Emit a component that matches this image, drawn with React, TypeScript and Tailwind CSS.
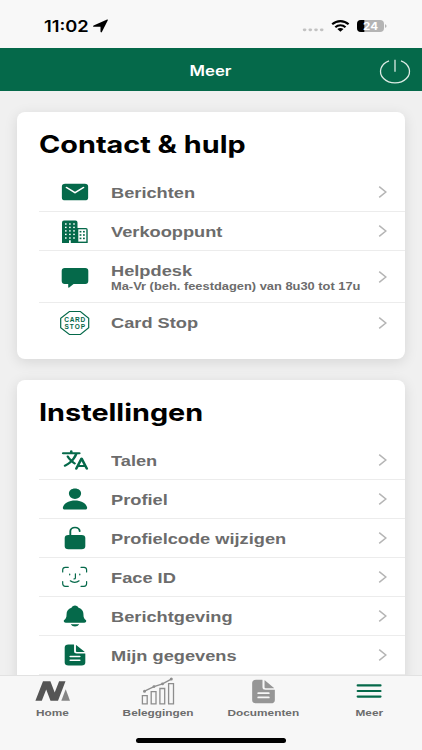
import type { ComponentType, ReactNode } from 'react';
import clsx from 'clsx';
import {
  IoDocumentText,
  IoLanguage,
  IoLockOpen,
  IoMail,
  IoNotifications,
  IoPerson,
} from 'react-icons/io5';

const Ion = ({ icon: Icon }: { icon: ComponentType<any> }) => (
  <Icon preserveAspectRatio="none" className="w-[30px] h-[24px]" />
);

const BuildingIcon = () => (
  <svg width="32" height="28" viewBox="0 0 32 28">
    <path
      d="M5 3.4h11.5a2 2 0 0 1 2 2V11H27a1.7 1.7 0 0 1 1.7 1.7V26H3V5.4a2 2 0 0 1 2-2z"
      fill="#05694a"
    />
    <path d="M19.3 12.3h8V24.6h-8z" fill="#fff" />
    {[7, 10.4, 13.9, 17.4, 21].map((y) => (
      <g key={y} fill="#fff">
        <rect x="6" y={y - 0.7} width="1.6" height="1.4" />
        <rect x="10.1" y={y - 0.7} width="1.6" height="1.4" />
        <rect x="14.2" y={y - 0.7} width="1.6" height="1.4" />
      </g>
    ))}
    {[14.7, 18, 21.4].map((y) => (
      <g key={y} fill="#05694a">
        <rect x="20.6" y={y - 0.8} width="1.8" height="1.6" />
        <rect x="24" y={y - 0.8} width="1.8" height="1.6" />
      </g>
    ))}
    <path d="M10 23.2h1.8V26H10z" fill="#fff" />
  </svg>
);

const ChatIcon = () => (
  <svg width="32" height="28" viewBox="0 0 32 28" fill="#05694a">
    <path d="M5.7 5h20.6a3 3 0 0 1 3 2.8v10.2a3 3 0 0 1-3 2.9H14.6l-4.4 3.6c-.5.4-1 .2-1-.4v-3.2H5.7a3 3 0 0 1-3-2.9V7.8a3 3 0 0 1 3-2.8z" />
  </svg>
);

const CardStopIcon = () => (
  <svg width="32" height="28" viewBox="0 0 32 28">
    <path
      d="M10.4 2.5h11l8.3 6.8v9.4l-8.3 6.8h-11L1.7 18.7V9.3z"
      fill="none"
      stroke="#05694a"
      strokeWidth="1.2"
    />
    <g
      fill="#05694a"
      fontFamily="Liberation Sans, Arial, sans-serif"
      fontWeight="700"
      fontSize="6.5"
    >
      <text x="5.2" y="12.9" textLength="21" lengthAdjust="spacing">
        CARD
      </text>
      <text x="5.4" y="19.6" textLength="20.7" lengthAdjust="spacing">
        STOP
      </text>
    </g>
  </svg>
);

const FaceIdIcon = () => (
  <svg
    width="32"
    height="28"
    viewBox="0 0 32 28"
    fill="none"
    stroke="#05694a"
    strokeWidth="1.2"
    strokeLinecap="round"
  >
    <path d="M3.7 9V6.8a2.6 2.6 0 0 1 2.6-2.5h3M22 4.3h3a2.6 2.6 0 0 1 2.6 2.5V9M27.6 18.6v2.2a2.6 2.6 0 0 1-2.6 2.5h-3M9.3 23.3h-3a2.6 2.6 0 0 1-2.6-2.5v-2.2" />
    <path d="M10.7 11v.8M20.8 11v.8M16.4 10.8v4.1c0 .7-.4 1-1.4 1M11.3 17.8c2.4 2.2 6.4 2.2 8.8 0" />
  </svg>
);

const Chevron = () => (
  <svg
    width="12"
    height="14"
    viewBox="0 0 12 14"
    fill="none"
    stroke="#b5b5b5"
    strokeWidth="1.5"
    className="mr-[16px]"
  >
    <path d="M2.2 1.6 8.8 7 2.2 12.4" />
  </svg>
);

type RowProps = {
  icon: ReactNode;
  label: string;
  sub?: string;
  last?: boolean;
};

const Row = ({ icon, label, sub, last }: RowProps) => (
  <div
    className={clsx(
      'ml-[22px] flex items-center',
      sub ? 'h-[52px]' : 'h-[39px]',
      !last && 'border-b border-[#ececec]'
    )}
  >
    <div className="w-[72px] pl-[20px] flex shrink-0 text-[#05694a]">
      <div className="w-[32px] flex justify-center">{icon}</div>
    </div>
    <div className="flex-1 text-[#6c6c6c] font-bold whitespace-nowrap">
      <div className="origin-left scale-x-[1.215] text-[15px] leading-[18px] pt-px">
        {label}
      </div>
      {sub && (
        <div className="origin-left scale-x-[1.225] w-[205px] text-[10.5px] leading-[13px]">
          {sub}
        </div>
      )}
    </div>
    <Chevron />
  </div>
);

const Card = ({ title, children }: { title: string; children: ReactNode }) => (
  <section className="mx-[17px] bg-white rounded-[8px] pb-[17px] shadow-[0_3px_14px_rgba(0,0,0,0.11)]">
    <h2 className="h-[61px] pt-[17px] pl-[22px] font-['Inter'] font-bold text-[24px] leading-[32px] text-black">
      <span className="inline-block origin-left scale-x-[1.2] whitespace-nowrap">
        {title}
      </span>
    </h2>
    {children}
  </section>
);

const Tab = ({ icon, label }: { icon: ReactNode; label: string }) => (
  <div className="flex-1 flex flex-col items-center">
    <div className="h-[30px] flex items-center">{icon}</div>
    <span className="scale-x-[1.22] text-[9.7px] leading-[14px] font-bold text-[#6c6c6c]">
      {label}
    </span>
  </div>
);

const StatusBar = () => (
  <div className="h-[47.5px] bg-[#f8f8f8] flex items-start pt-[17px] pl-[44px] pr-[34px]">
    <span className="w-[48px] font-['Inter'] font-semibold text-[15.5px] leading-[19px] text-black">
      <span className="inline-block origin-left scale-x-[1.18]">11:02</span>
    </span>
    <svg width="18" height="18" viewBox="0 0 18 18">
      <path
        d="M1.6 8.5 14.6 2.7c.9-.4 1.6.1 1.1.9L10 14.8c-.5.9-1.5.8-1.5-.2V9.8H2c-1.1 0-1.3-.8-.4-1.3z"
        fill="#000"
      />
    </svg>
    <svg width="86" height="18" viewBox="302 17 86 18" className="ml-auto">
      <g fill="#c2c2c2">
        <rect x="302.8" y="28.4" width="3.6" height="2.8" rx="1.4" />
        <rect x="308.5" y="28.4" width="3.6" height="2.8" rx="1.4" />
        <rect x="314.2" y="28.4" width="3.6" height="2.8" rx="1.4" />
        <rect x="319.9" y="28.4" width="3.6" height="2.8" rx="1.4" />
      </g>
      <g fill="none" stroke="#000" strokeWidth="2.2">
        <path d="M332.2 24.3c4.7-4.3 11.7-4.3 16.4 0" />
        <path d="M335.3 27.2c2.9-2.6 7.3-2.6 10.2 0" />
      </g>
      <path d="M337.3 29.1c1.8-1.5 4.4-1.5 6.2 0l-3.1 2.6z" fill="#000" />
      <rect x="357" y="20" width="27" height="12" rx="4" fill="#b4b4b4" />
      <path d="M364.3 20v12H361a4 4 0 0 1-4-4v-4a4 4 0 0 1 4-4z" fill="#000" />
      <path d="M385 24.2c2 .3 2 3.3 0 3.6z" fill="#b4b4b4" />
      <text
        x="363"
        y="29.8"
        textLength="15"
        lengthAdjust="spacingAndGlyphs"
        fill="#fff"
        fontFamily="Inter, sans-serif"
        fontWeight="700"
        fontSize="10.5"
      >
        24
      </text>
    </svg>
  </div>
);

const Header = () => (
  <header className="h-[43px] bg-[#05694a] flex items-center">
    <div className="w-[48px]" />
    <h1 className="flex-1 text-center font-['Inter'] font-semibold text-[14px] text-white">
      <span className="inline-block pt-[3px] scale-x-[1.2]">Meer</span>
    </h1>
    <svg
      width="48"
      height="43"
      viewBox="374 48 48 43"
      fill="none"
      stroke="#dcebe4"
      strokeWidth="1.3"
    >
      <path d="M389 60.8a14.5 11.6 0 1 0 12 0" />
      <path d="M395 59.8v12" />
    </svg>
  </header>
);

const HomeLogo = () => (
  <svg width="36" height="22" viewBox="0 0 36 22">
    <path
      d="M8 1.2h7.4l4.3 11.3 4.4-11.3h6.4L23 20.8h-7.5L11.2 9.4 6.8 20.8H.4z"
      fill="#555"
    />
    <path d="M30.7 9.3 35 20.8h-8.7z" fill="#858585" />
  </svg>
);

const ChartIcon = () => (
  <svg
    width="36"
    height="28"
    viewBox="0 0 36 28"
    fill="none"
    stroke="#8d8d8d"
    strokeWidth="1.3"
  >
    <path d="M2.4 18.6h4.8v8.2H2.4zM11.2 14.6H16v12.2h-4.8zM19.9 11.5h4.8v15.3h-4.8zM28.6 6.6h4.9v20.2h-4.9z" />
    <path d="M4.5 14.2 14 9.6l8.5-2.7 8.8-4.8" />
    <g fill="#8d8d8d" stroke="none">
      <circle cx="4.5" cy="14.2" r="1.5" />
      <circle cx="14" cy="9.6" r="1.4" />
      <circle cx="22.5" cy="6.9" r="1.4" />
      <circle cx="31.3" cy="2.1" r="1.5" />
    </g>
  </svg>
);

const MenuIcon = () => (
  <svg
    width="26"
    height="20"
    viewBox="0 0 26 20"
    stroke="#05694a"
    strokeWidth="2.2"
    strokeLinecap="round"
  >
    <path d="M1.7 4.4h22.8M1.7 10h22.8M1.7 15.6h22.8" />
  </svg>
);

const App = () => {
  return (
    <div className="w-[422px] h-[750px] overflow-hidden flex flex-col bg-[#f0f0f0] font-['Liberation_Sans',Arial,sans-serif]">
      <StatusBar />
      <Header />
      <main className="h-[584.5px] shrink-0 overflow-hidden pt-[21.5px] flex flex-col gap-[21px]">
        <Card title="Contact & hulp">
          <Row icon={<Ion icon={IoMail} />} label="Berichten" />
          <Row icon={<BuildingIcon />} label="Verkooppunt" />
          <Row
            icon={<ChatIcon />}
            label="Helpdesk"
            sub="Ma-Vr (beh. feestdagen) van 8u30 tot 17u"
          />
          <Row icon={<CardStopIcon />} label="Card Stop" last />
        </Card>
        <Card title="Instellingen">
          <Row icon={<Ion icon={IoLanguage} />} label="Talen" />
          <Row icon={<Ion icon={IoPerson} />} label="Profiel" />
          <Row icon={<Ion icon={IoLockOpen} />} label="Profielcode wijzigen" />
          <Row icon={<FaceIdIcon />} label="Face ID" />
          <Row icon={<Ion icon={IoNotifications} />} label="Berichtgeving" />
          <Row icon={<Ion icon={IoDocumentText} />} label="Mijn gegevens" />
        </Card>
      </main>
      <nav className="h-[75px] shrink-0 bg-[#f7f7f7] border-t border-[#e2e2e2] flex flex-col">
        <div className="flex">
          <Tab icon={<HomeLogo />} label="Home" />
          <Tab icon={<ChartIcon />} label="Beleggingen" />
          <Tab
            icon={
              <IoDocumentText
                preserveAspectRatio="none"
                className="w-[33px] h-[27px] text-[#969696]"
              />
            }
            label="Documenten"
          />
          <Tab icon={<MenuIcon />} label="Meer" />
        </div>
        <div className="mt-auto mb-[7px] mx-auto w-[150px] h-[5px] rounded-full bg-black" />
      </nav>
    </div>
  );
};

export default App;
